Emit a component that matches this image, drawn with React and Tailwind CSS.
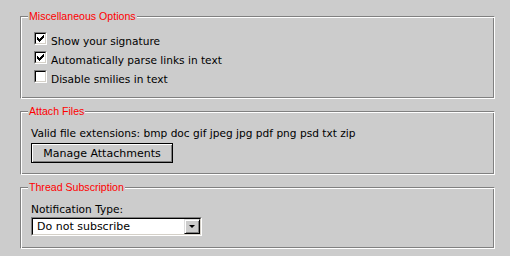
import React from 'react';

const body = { fontFamily: '"DejaVu Sans", Verdana, sans-serif' };
const legendFont = { fontFamily: '"Liberation Sans", Tahoma, Arial, sans-serif' };

function Check() {
  // classic 7x7 pixel tick
  const cols = [
    [2, 4], [3, 5], [4, 6], [5, 5], [6, 4], [7, 3], [8, 2],
  ];
  return (
    <svg width="9" height="9" viewBox="0 0 9 9" shapeRendering="crispEdges">
      {cols.map(([x, y]) => (
        <rect key={x} x={x - 1} y={y - 1} width="1" height="3" fill="#000" />
      ))}
    </svg>
  );
}

function Checkbox({ checked }) {
  return (
    <span className="shrink-0 w-[13px] h-[13px] border border-t-[#808080] border-l-[#808080] border-r-white border-b-white">
      <span className="flex w-full h-full items-center justify-center bg-white border border-t-black border-l-black border-r-[#d4d0c8] border-b-[#d4d0c8]">
        {checked && <Check />}
      </span>
    </span>
  );
}

function Fieldset({ title, className = '', children }) {
  return (
    <fieldset
      className={`w-[475px] ml-[20px] pl-[7px] border border-t-[#808080] border-l-[#808080] border-r-white border-b-white shadow-[inset_1px_1px_0_#fff,inset_-1px_-1px_0_#808080] ${className}`}
    >
      <legend style={legendFont} className="px-[1px] text-[10.6px] leading-[13px] text-[#ff0000] bg-[#cccccc]">
        {title}
      </legend>
      <div className="pl-[3px]">{children}</div>
    </fieldset>
  );
}

const options = [
  { label: 'Show your signature', checked: true },
  { label: 'Automatically parse links in text', checked: true },
  { label: 'Disable smilies in text', checked: false },
];

export default function App() {
  return (
    <div style={body} className="w-[510px] h-[256px] bg-[#cccccc] pt-[10px] text-black overflow-hidden">
      {/* Miscellaneous Options */}
      <Fieldset title="Miscellaneous Options" className="pb-[9px]">
        <div className="pt-[9px] pl-[3px]">
          {options.map(o => (
            <label key={o.label} className="flex items-start gap-[4px] h-[19px]">
              <Checkbox checked={o.checked} />
              <span className="text-[10.6px] leading-[19px] -mt-[0px]">{o.label}</span>
            </label>
          ))}
        </div>
      </Fieldset>

      {/* Attach Files */}
      <Fieldset title="Attach Files" className="mt-[6px] pb-[11px]">
        <div className="pt-[9px] text-[10.6px] leading-[13px]">
          Valid file extensions: bmp doc gif jpeg jpg pdf png psd txt zip
        </div>
        <button
          type="button"
          className="mt-[3px] w-[142px] h-[20px] flex items-center justify-center border border-black bg-[#cccccc] shadow-[inset_1px_1px_0_#fff,inset_-1px_-1px_0_#808080] text-[11px] leading-[13px] text-black"
        >
          Manage Attachments
        </button>
      </Fieldset>

      {/* Thread Subscription */}
      <Fieldset title="Thread Subscription" className="mt-[6px] pb-[12px]">
        <div className="pt-[9px] text-[10.6px] leading-[13px]">Notification Type:</div>
        <div className="mt-[1px] w-[171px] h-[19px] border border-t-[#808080] border-l-[#808080] border-r-white border-b-white">
          <div className="flex h-full bg-white border border-t-black border-l-black border-r-[#d4d0c8] border-b-[#d4d0c8]">
            <span className="flex-1 pl-[4px] text-[11px] leading-[15px] whitespace-nowrap">Do not subscribe</span>
            <span className="w-[16px] h-full flex items-center justify-center bg-[#cccccc] border border-t-[#dddddd] border-l-[#dddddd] border-r-black border-b-black shadow-[inset_1px_1px_0_#fff,inset_-1px_-1px_0_#808080]">
              <span className="w-0 h-0 border-l-[3px] border-r-[3px] border-t-[3px] border-l-transparent border-r-transparent border-t-black" />
            </span>
          </div>
        </div>
      </Fieldset>
    </div>
  );
}
